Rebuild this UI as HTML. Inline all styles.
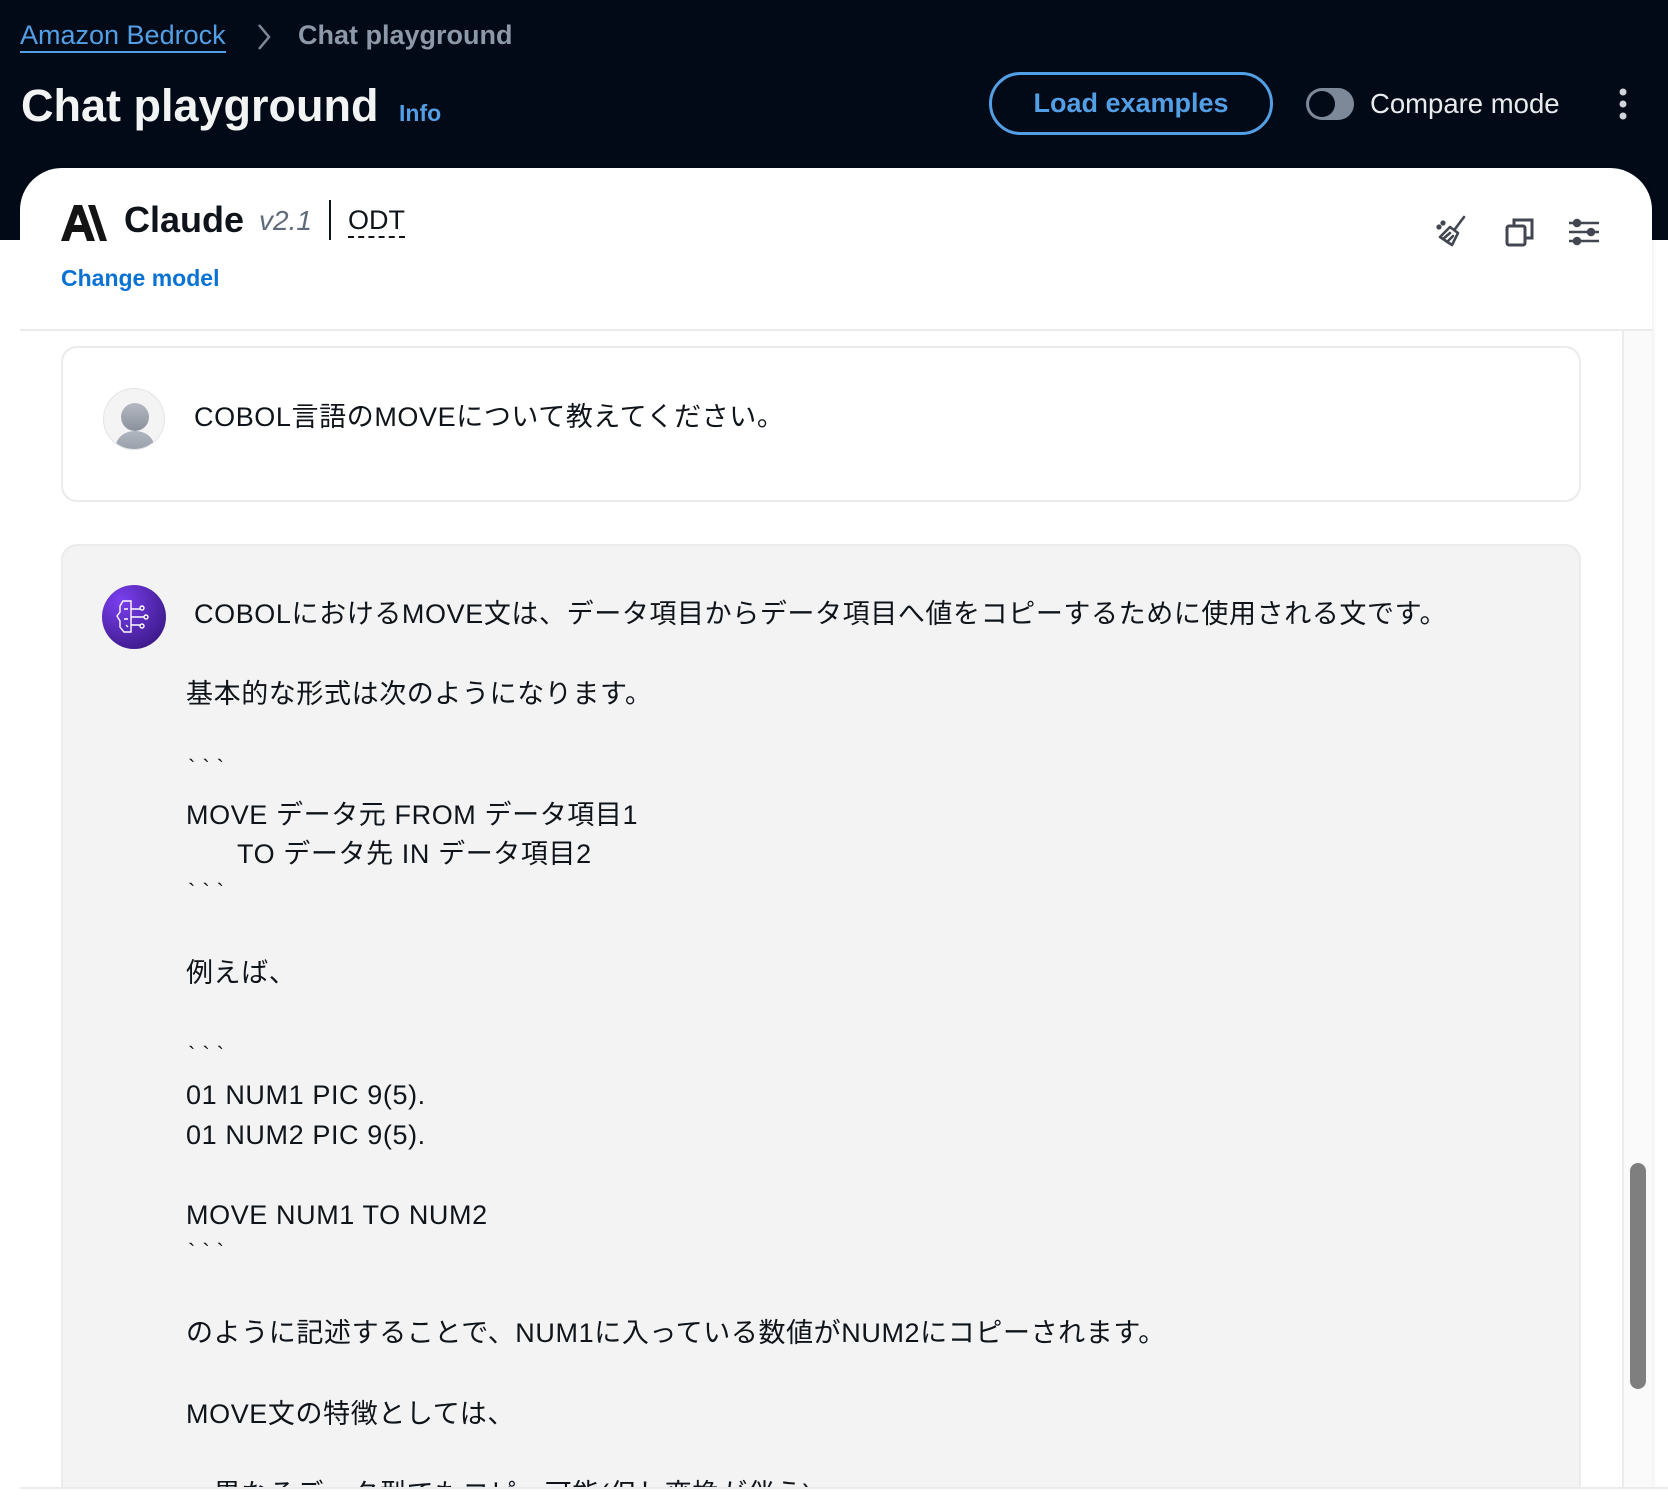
<!DOCTYPE html>
<html><head><meta charset="utf-8">
<style>
*{margin:0;padding:0;box-sizing:border-box}
html,body{width:1668px;height:1500px;overflow:hidden;background:#fff}
body{font-family:"Liberation Sans","Noto Sans CJK JP",sans-serif}
#wrap{position:relative;width:1668px;height:1500px;overflow:hidden}
.hdr{position:absolute;left:0;top:0;width:1668px;height:240px;background:#020a17}
.abs{position:absolute;white-space:nowrap}
.card{position:absolute;left:20px;top:168px;width:1632px;height:1332px;background:#fff;border-radius:42px 42px 0 0;box-shadow:2px 0 4px rgba(0,0,0,.06)}
.msg{font-size:27px;color:#0f141a;line-height:40px;letter-spacing:0.6px}
.bt{letter-spacing:7px;font-size:22px}
</style></head><body><div id="wrap">
<div class="hdr"></div>
<div class="abs" style="left:20px;top:19px;font-size:27px;color:#539fe5;border-bottom:2px solid #539fe5;line-height:32px">Amazon Bedrock</div>
<svg class="abs" style="left:254px;top:22px" width="20" height="30"><path d="M5 3 L15 15 L5 27" stroke="#7d8998" stroke-width="2.5" fill="none"/></svg>
<div class="abs" style="left:298px;top:19px;font-size:27px;color:#8d99a8;font-weight:bold;line-height:32px">Chat playground</div>
<div class="abs" style="left:21px;top:78px;font-size:45px;color:#f2f3f3;font-weight:bold;line-height:56px">Chat playground</div>
<div class="abs" style="left:399px;top:99px;font-size:23px;color:#539fe5;font-weight:bold;line-height:28px">Info</div>
<div class="abs" style="left:989px;top:72px;width:284px;height:63px;border:3px solid #539fe5;border-radius:32px;color:#539fe5;font-size:27px;font-weight:bold;text-align:center;line-height:57px">Load examples</div>
<div class="abs" style="left:1306px;top:88px;width:48px;height:32px;border-radius:16px;background:#7d8998"><div style="position:absolute;left:3px;top:3px;width:26px;height:26px;border-radius:50%;background:#020a17"></div></div>
<div class="abs" style="left:1370px;top:88px;font-size:27.5px;color:#e9ebed;line-height:32px">Compare mode</div>
<svg class="abs" style="left:1615px;top:88px" width="16" height="34"><circle cx="8" cy="4" r="3.5" fill="#d1d5db"/><circle cx="8" cy="16" r="3.5" fill="#d1d5db"/><circle cx="8" cy="28" r="3.5" fill="#d1d5db"/></svg>

<div class="card"></div>
<svg class="abs" style="left:61px;top:205px" width="46" height="36"><path d="M0 36 L13 0 L21 0 L34 36 L26 36 L23 27 L11 27 L8 36Z M13 20 L21 20 L17 9Z" fill="#141414"/><path d="M27 0 L34 0 L46 36 L39 36Z" fill="#141414"/></svg>
<div class="abs" style="left:124px;top:197px;font-size:36px;font-weight:bold;color:#0f141a;line-height:46px">Claude</div>
<div class="abs" style="left:259px;top:204px;font-size:28px;font-style:italic;color:#5f6b7a;line-height:34px">v2.1</div>
<div class="abs" style="left:329px;top:200px;width:2px;height:40px;background:#0f141a"></div>
<div class="abs" style="left:348px;top:204px;font-size:27px;color:#0f141a;line-height:32px;border-bottom:2px dashed #0f141a">ODT</div>
<div class="abs" style="left:61px;top:263px;font-size:23px;font-weight:bold;color:#0972d3;line-height:30px">Change model</div>
<svg class="abs" style="left:1434px;top:213px" width="36" height="36" fill="none" stroke="#424650" stroke-width="2.6" stroke-linecap="round" stroke-linejoin="round"><path d="M30 4 L21 16 M16 14 L24 20 L18 32 L6 24Z M9 26 L16 20 M13 29 L19 23"/><circle cx="5" cy="14" r="1.3" fill="#424650"/><circle cx="9" cy="10" r="1.3" fill="#424650"/></svg>
<svg class="abs" style="left:1505px;top:217px" width="30" height="30" fill="none" stroke="#424650" stroke-width="3"><rect x="2" y="9" width="18" height="19" rx="2"/><path d="M9 9 V3 H27 V21 H20"/></svg>
<svg class="abs" style="left:1568px;top:217px" width="32" height="30" stroke="#424650" stroke-width="2.6" fill="#424650"><path d="M1 6 H31 M1 15 H31 M1 24 H31"/><circle cx="9" cy="6" r="3"/><circle cx="23" cy="15" r="3"/><circle cx="9" cy="24" r="3"/></svg>
<div class="abs" style="left:20px;top:329px;width:1632px;height:2px;background:#e9ebed"></div>

<div class="abs" style="left:1622px;top:331px;width:30px;height:1156px;background:#fafafa;border-left:2px solid #e9ebed"></div>
<div class="abs" style="left:1630px;top:1163px;width:16px;height:226px;border-radius:8px;background:#7f7f7f"></div>

<div class="abs" style="left:61px;top:346px;width:1520px;height:156px;border:2px solid #e9ebed;border-radius:16px;background:#fff"></div>
<div class="abs" style="left:103px;top:388px;width:62px;height:62px;border-radius:50%;background:#f4f4f5;border:1px solid #e2e4e8;overflow:hidden">
<div style="position:absolute;left:17px;top:14px;width:28px;height:28px;border-radius:50%;background:linear-gradient(#b4b9c2,#8b919c)"></div>
<div style="position:absolute;left:12px;top:42px;width:38px;height:30px;border-radius:50% 50% 0 0;background:linear-gradient(#b0b6c0,#8d939e)"></div></div>
<div class="abs msg" style="left:194px;top:397px">COBOL言語のMOVEについて教えてください。</div>

<div class="abs" style="left:61px;top:544px;width:1520px;height:960px;border:2px solid #e9ebed;border-radius:16px;background:#f3f3f3"></div>
<div class="abs" style="left:102px;top:585px;width:64px;height:64px;border-radius:50%;background:radial-gradient(circle at 30% 25%,#7a3ff0,#3d1a8a 80%)"></div>
<svg class="abs" style="left:114px;top:597px" width="40" height="40" fill="none" stroke="#fff" stroke-width="1.4"><path d="M16 4 L9 4 L6 9 L6 15 L3 19 L6 24 L6 30 L10 35 L17 35 L17 4Z M17 12 H26 M17 20 H30 M17 28 H26 M10 12 H14 M10 22 H14 M12 28 L14 30"/><circle cx="28" cy="11" r="2"/><circle cx="32" cy="20" r="2"/><circle cx="28" cy="29" r="2"/></svg>
<div class="abs msg" style="left:194px;top:594px">COBOLにおけるMOVE文は、データ項目からデータ項目へ値をコピーするために使用される文です。</div>
<div class="abs msg" style="left:186px;top:674px">基本的な形式は次のようになります。</div>
<div class="abs msg bt" style="left:188px;top:748px">&#96;&#96;&#96;</div>
<div class="abs msg" style="left:186px;top:795px">MOVE データ元 FROM データ項目1</div>
<div class="abs msg" style="left:237px;top:834px">TO データ先 IN データ項目2</div>
<div class="abs msg bt" style="left:188px;top:872px">&#96;&#96;&#96;</div>
<div class="abs msg" style="left:186px;top:953px">例えば、</div>
<div class="abs msg bt" style="left:188px;top:1035px">&#96;&#96;&#96;</div>
<div class="abs msg" style="left:186px;top:1075px">01 NUM1 PIC 9(5).</div>
<div class="abs msg" style="left:186px;top:1115px">01 NUM2 PIC 9(5).</div>
<div class="abs msg" style="left:186px;top:1195px">MOVE NUM1 TO NUM2</div>
<div class="abs msg bt" style="left:188px;top:1232px">&#96;&#96;&#96;</div>
<div class="abs msg" style="left:186px;top:1313px">のように記述することで、NUM1に入っている数値がNUM2にコピーされます。</div>
<div class="abs msg" style="left:186px;top:1394px">MOVE文の特徴としては、</div>
<div class="abs msg" style="left:186px;top:1474px">・異なるデータ型でもコピー可能(但し変換が伴う)</div>
<div class="abs" style="left:20px;top:1487px;width:1648px;height:13px;background:#fff;border-top:2px solid #e9ebed;z-index:5"></div>
</div></body></html>
